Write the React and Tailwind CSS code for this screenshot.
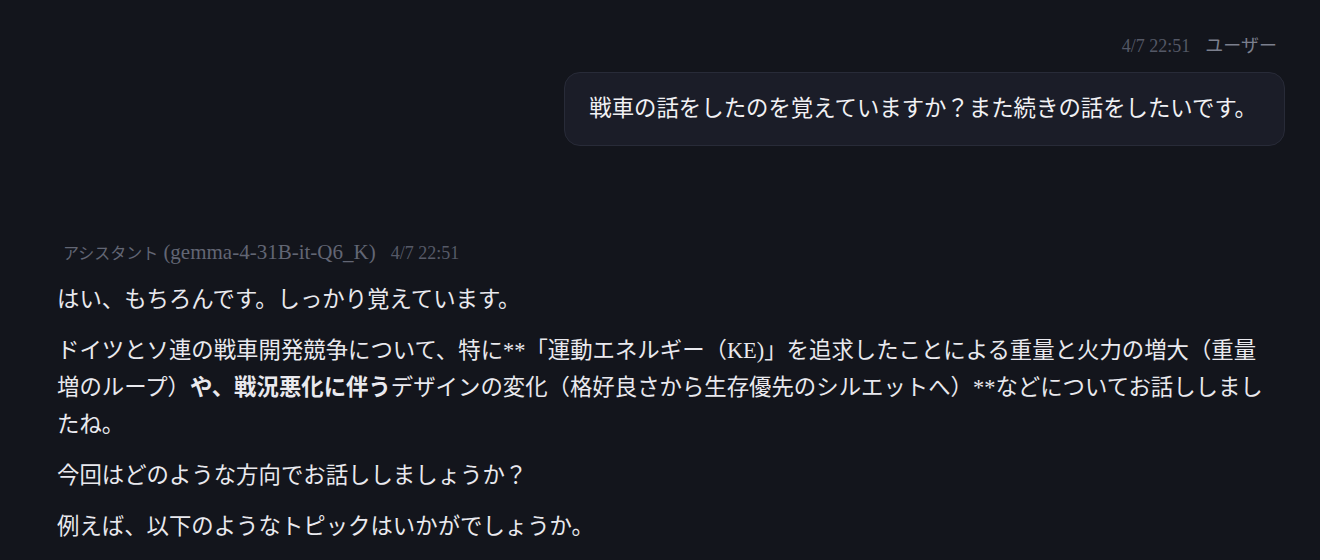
import React from 'react';

const userMessage = {
  time: '4/7 22:51',
  role: 'ユーザー',
  text: '戦車の話をしたのを覚えていますか？また続きの話をしたいです。',
};

const assistantMessage = {
  role: 'アシスタント',
  model: '(gemma-4-31B-it-Q6_K)',
  time: '4/7 22:51',
};

const App = () => {
  return (
    <div className="h-[560px] overflow-hidden bg-[#13151c] font-['Liberation_Serif','Noto_Sans_CJK_JP',serif] pl-[57px] pr-[35px] pt-[34px]">
      {/* user turn */}
      <div className="flex flex-col items-end">
        <div className="flex items-center gap-[15px] pr-[8px] text-[18px] leading-[24px]">
          <span className="text-[#545866]">{userMessage.time}</span>
          <span className="text-[#7b7f8d]">{userMessage.role}</span>
        </div>
        <div className="mt-[14px] rounded-2xl border border-[#282b38] bg-[#1b1d28] pl-6 pr-[27px] py-[17px] text-[22.4px] leading-[38px] text-[#f1f1f4]">
          {userMessage.text}
        </div>
      </div>

      {/* assistant turn */}
      <div className="mt-[94px]">
        <div className="flex items-baseline pl-[6px] leading-[24px]">
          <span className="text-[16px] text-[#626674]">{assistantMessage.role}</span>
          <span className="ml-[5px] text-[21px] text-[#626674]">{assistantMessage.model}</span>
          <span className="ml-[15px] text-[18px] text-[#565a68]">{assistantMessage.time}</span>
        </div>
        <div className="mt-[15px] w-[1206px] text-[22.4px] leading-[37px] text-[#e9e9ee]">
          <p className="mb-[14px]">はい、もちろんです。しっかり覚えています。</p>
          <p className="mb-[14px]">
            ドイツとソ連の戦車開発競争について、特に**「運動エネルギー（KE)」を追求したことによる重量と火力の増大（重量増のループ）
            <strong className="font-bold">や、戦況悪化に伴う</strong>
            デザインの変化（格好良さから生存優先のシルエットへ）**などについてお話ししましたね。
          </p>
          <p className="mb-[14px]">今回はどのような方向でお話ししましょうか？</p>
          <p className="mb-[14px]">例えば、以下のようなトピックはいかがでしょうか。</p>
        </div>
      </div>
    </div>
  );
};

export default App;
